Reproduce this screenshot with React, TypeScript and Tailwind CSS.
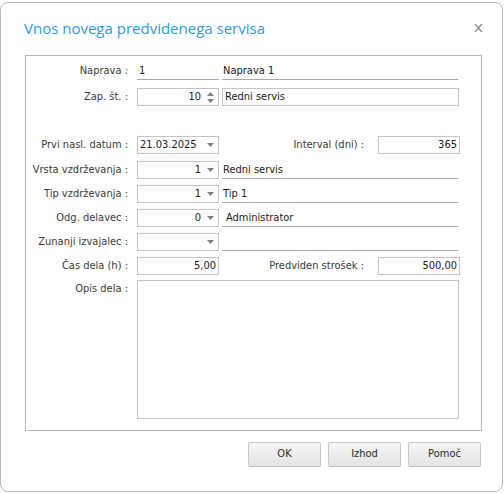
import { ReactNode } from "react"

const FONT = { fontFamily: '"DejaVu Sans Condensed", "Liberation Sans", sans-serif' }

function Label({ children, className = "" }: { children: ReactNode; className?: string }) {
  return (
    <div className={`w-[103px] shrink-0 text-right pr-px text-[11px] leading-[18px] text-[#3a3a3a] ${className}`}>
      {children}
    </div>
  )
}

// small gray triangle used by combos and spinner
function Caret({ up = false }: { up?: boolean }) {
  return (
    <svg width="7" height="4" viewBox="0 0 7 4" className="block">
      {up ? <path d="M0 4 L3.5 0 L7 4 Z" fill="#808080" /> : <path d="M0 0 L7 0 L3.5 4 Z" fill="#808080" />}
    </svg>
  )
}

function Box({ children, className = "" }: { children?: ReactNode; className?: string }) {
  return (
    <div className={`h-[18px] border border-[#c3c3c3] bg-white flex items-center text-[11px] text-[#1a1a1a] ${className}`}>
      {children}
    </div>
  )
}

function Combo({ value, left = false }: { value?: string; left?: boolean }) {
  return (
    <Box className="w-[82px]">
      <span className={`flex-1 ${left ? "text-left pl-[2px]" : "text-right"}`}>{value}</span>
      <span className="w-[17px] flex justify-center pl-[1px]">
        <Caret />
      </span>
    </Box>
  )
}

function Underlined({ children, className = "" }: { children?: ReactNode; className?: string }) {
  return (
    <div className={`h-[18px] border-b border-[#a9a9a9] text-[11px] leading-[18px] text-[#1a1a1a] ${className}`}>
      {children}
    </div>
  )
}

function Button({ children }: { children: ReactNode }) {
  return (
    <button className="w-[73px] h-[25px] rounded-[2px] border border-[#c6c6c6] bg-gradient-to-b from-[#f6f6f6] to-[#e4e4e4] text-[11px] text-[#2a2a2a]">
      {children}
    </button>
  )
}

export default function App() {
  return (
    <div className="w-[504px] h-[493px] bg-white pt-[2px]" style={FONT}>
      <div className="w-[503px] h-[490px] border border-[#b8b8b8] rounded-[8px] bg-white flex flex-col">
        {/* title bar */}
        <div className="h-[52px] flex items-start justify-between pl-[23px] pr-[18px] pt-[15px]">
          <h1 className="text-[15px] leading-[20px] text-[#2b9be0]" style={{ fontFamily: '"Open Sans", sans-serif' }}>
            Vnos novega predvidenega servisa
          </h1>
          <span className="text-[15px] leading-[20px] text-[#8a8a8a]">×</span>
        </div>

        {/* group box */}
        <div className="ml-[24px] w-[457px] h-[376px] border border-[#b5b5b5] pt-[6px] flex flex-col">
          <div className="flex items-center">
            <Label>Naprava :</Label>
            <Underlined className="ml-[8px] w-[82px] pl-[2px]">1</Underlined>
            <Underlined className="ml-[3px] w-[236px] pl-[1px]">Naprava 1</Underlined>
          </div>

          <div className="flex items-center mt-[8px]">
            <Label>Zap. št. :</Label>
            <Box className="ml-[8px] w-[82px]">
              <span className="flex-1 text-right">10</span>
              <span className="w-[17px] flex flex-col items-center gap-[3px] pl-[1px]">
                <Caret up />
                <Caret />
              </span>
            </Box>
            <Box className="ml-[3px] w-[237px] pl-[2px]">Redni servis</Box>
          </div>

          <div className="flex items-center mt-[30px]">
            <Label>Prvi nasl. datum :</Label>
            <div className="ml-[8px]">
              <Combo value="21.03.2025" left />
            </div>
            <div className="flex-1 text-right pr-[14px] text-[11px] text-[#3a3a3a]">Interval (dni) :</div>
            <Box className="w-[82px] mr-[21px] justify-end pr-[2px]">365</Box>
          </div>

          <div className="flex items-center mt-[7px]">
            <Label>Vrsta vzdrževanja :</Label>
            <div className="ml-[8px]">
              <Combo value="1" />
            </div>
            <Underlined className="ml-[3px] w-[236px] pl-[1px]">Redni servis</Underlined>
          </div>

          <div className="flex items-center mt-[6px]">
            <Label>Tip vzdrževanja :</Label>
            <div className="ml-[8px]">
              <Combo value="1" />
            </div>
            <Underlined className="ml-[3px] w-[236px] pl-[1px]">Tip 1</Underlined>
          </div>

          <div className="flex items-center mt-[6px]">
            <Label>Odg. delavec :</Label>
            <div className="ml-[8px]">
              <Combo value="0" />
            </div>
            <Underlined className="ml-[3px] w-[236px] pl-[4px]">Administrator</Underlined>
          </div>

          <div className="flex items-center mt-[6px]">
            <Label>Zunanji izvajalec :</Label>
            <div className="ml-[8px]">
              <Combo />
            </div>
            <Underlined className="ml-[3px] w-[236px]" />
          </div>

          <div className="flex items-center mt-[6px]">
            <Label>Čas dela (h) :</Label>
            <Box className="ml-[8px] w-[82px] justify-end pr-[2px]">5,00</Box>
            <div className="flex-1 text-right pr-[14px] text-[11px] text-[#3a3a3a]">Predviden strošek :</div>
            <Box className="w-[82px] mr-[21px] justify-end pr-[2px]">500,00</Box>
          </div>

          <div className="flex items-start mt-[5px]">
            <Label>Opis dela :</Label>
            <div className="ml-[8px] w-[322px] h-[139px] border border-[#c3c3c3] bg-white" />
          </div>
        </div>

        {/* buttons */}
        <div className="flex justify-end gap-[7px] pr-[21px] mt-[11px]">
          <Button>OK</Button>
          <Button>Izhod</Button>
          <Button>Pomoč</Button>
        </div>
      </div>
    </div>
  )
}
